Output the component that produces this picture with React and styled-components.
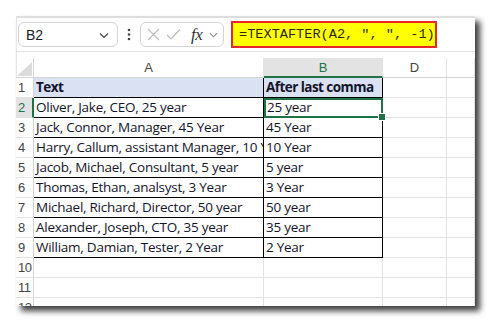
import React from "react";
import styled, { createGlobalStyle } from "styled-components";

const Global = createGlobalStyle`
  html, body { margin: 0; padding: 0; background: #ffffff; }
  body { width: 492px; height: 323px; overflow: hidden; }
`;

const Page = styled.div`
  padding: 16px 0 0 16px;
`;

const Window = styled.div`
  width: 459px;
  height: 290px;
  background: #ffffff;
  overflow: hidden;
  border-top: 2px solid #dedede;
  box-sizing: border-box;
  box-shadow: 1px 0 0 #e6e6e6 inset, 5px 5px 6px rgba(0, 0, 0, 0.75);
  font-family: "Open Sans", "Liberation Sans", sans-serif;
`;

const FormulaBar = styled.div`
  display: flex;
  align-items: center;
  height: 34px;
  padding-left: 2px;
  border-bottom: 1px solid #e3e3e3;
  box-sizing: border-box;
`;

const NameBox = styled.div`
  width: 100px;
  height: 25px;
  box-sizing: border-box;
  border: 1px solid #d4d4d4;
  border-radius: 6px;
  display: flex;
  align-items: center;
  justify-content: space-between;
  padding: 0 7px 0 7px;
  font-family: "Liberation Sans", Arial, sans-serif;
  font-size: 14px;
  color: #222;
`;

const Dots = styled.div`
  width: 22px;
  display: flex;
  justify-content: center;
`;

const FxBox = styled.div`
  width: 84px;
  height: 25px;
  box-sizing: border-box;
  border: 1px solid #d4d4d4;
  border-radius: 6px;
  display: flex;
  align-items: center;
  padding-left: 6px;
  gap: 6px;
`;

const Fx = styled.span`
  font-family: "Liberation Serif", "DejaVu Serif", serif;
  font-style: italic;
  font-size: 17px;
  color: #333;
  margin-left: 4px;
  letter-spacing: -0.5px;
`;

const FormulaBox = styled.div`
  margin-left: 7px;
  width: 206px;
  height: 27px;
  box-sizing: border-box;
  background: #ffff00;
  border: 2px solid #e8262c;
  display: flex;
  align-items: center;
  padding-left: 6px;
  font-family: "Liberation Mono", "DejaVu Sans Mono", monospace;
  font-size: 13.6px;
  color: #2b2b1a;
  white-space: pre;
  overflow: hidden;
`;

const Sheet = styled.div`
  display: grid;
  grid-template-columns: 18px 230px 119px 64px 28px;
  grid-auto-rows: 20px;
  margin-top: 6px;
`;

const Cell = styled.div`
  box-sizing: border-box;
  border-right: 1px solid ${(p) => p.$r || "#e1e1e1"};
  border-bottom: 1px solid ${(p) => p.$b || "#e1e1e1"};
  background: ${(p) => p.$bg || "#ffffff"};
  font-family: "Open Sans", "Liberation Sans", sans-serif;
  font-size: 13.5px;
  font-weight: ${(p) => (p.$bold ? 700 : 400)};
  color: #14142b;
  padding-left: 2px;
  line-height: 19px;
  white-space: nowrap;
  overflow: hidden;
  text-overflow: clip;
  letter-spacing: ${(p) => (p.$bold ? "-0.55px" : "-0.25px")};
`;

const ColHead = styled.div`
  box-sizing: border-box;
  border-right: 1px solid #e1e1e1;
  border-bottom: ${(p) => (p.$sel ? "2px solid #217346" : "1px solid #d4d4d4")};
  background: ${(p) => (p.$sel ? "#e3e3e3" : "#ffffff")};
  color: ${(p) => (p.$sel ? "#217346" : "#444")};
  font-family: "Liberation Sans", Arial, sans-serif;
  font-size: 13px;
  display: flex;
  align-items: center;
  justify-content: center;
`;

const Corner = styled.div`
  box-sizing: border-box;
  border-right: 1px solid #d4d4d4;
  border-bottom: 1px solid #d4d4d4;
  position: relative;
  overflow: hidden;
  &::after {
    content: "";
    position: absolute;
    right: 1px;
    bottom: 1px;
    width: 0;
    height: 0;
    border-left: 15px solid transparent;
    border-bottom: 14px solid #dcdcdc;
  }
`;

const RowHead = styled.div`
  box-sizing: border-box;
  border-right: ${(p) => (p.$sel ? "2px solid #217346" : "1px solid #d4d4d4")};
  border-bottom: 1px solid #e1e1e1;
  background: ${(p) => (p.$sel ? "#e3e3e3" : "#ffffff")};
  color: ${(p) => (p.$sel ? "#217346" : "#444")};
  font-family: "Liberation Sans", Arial, sans-serif;
  font-size: 13px;
  line-height: 19px;
  padding-left: 2px;
  letter-spacing: -0.5px;
`;

const Selected = styled(Cell)`
  position: relative;
  overflow: visible;
  outline: 2px solid #217346;
  outline-offset: -2px;
  padding-left: 3px;
  &::after {
    content: "";
    position: absolute;
    right: -4px;
    bottom: -4px;
    width: 6px;
    height: 6px;
    background: #217346;
    border: 1px solid #fff;
  }
`;

const data = [
  ["Oliver, Jake, CEO, 25 year", "25 year"],
  ["Jack, Connor, Manager, 45 Year", "45 Year"],
  ["Harry, Callum, assistant Manager, 10 Year", "10 Year"],
  ["Jacob, Michael, Consultant, 5 year", "5 year"],
  ["Thomas, Ethan, analsyst, 3 Year", "3 Year"],
  ["Michael, Richard, Director, 50 year", "50 year"],
  ["Alexander, Joseph, CTO, 35 year", "35 year"],
  ["William, Damian, Tester, 2 Year", "2 Year"],
];

const Chevron = ({ size = 12, color = "#444" }) => (
  <svg width={size} height={size} viewBox="0 0 12 12">
    <path d="M2 4.5 L6 8.5 L10 4.5" fill="none" stroke={color} strokeWidth="1.2" />
  </svg>
);

export default function App() {
  const blank = (key) => [
    <Cell key={key + "d"} />,
    <Cell key={key + "e"} />,
  ];
  return (
    <Page>
      <Global />
      <Window>
        <FormulaBar>
          <NameBox>
            <span>B2</span>
            <Chevron />
          </NameBox>
          <Dots>
            <svg width="4" height="13" viewBox="0 0 4 13">
              <circle cx="2" cy="2" r="1.3" fill="#444" />
              <circle cx="2" cy="6.5" r="1.3" fill="#444" />
              <circle cx="2" cy="11" r="1.3" fill="#444" />
            </svg>
          </Dots>
          <FxBox>
            <svg width="13" height="13" viewBox="0 0 13 13">
              <path d="M1 1 L12 12 M12 1 L1 12" stroke="#bdbdbd" strokeWidth="1.2" fill="none" />
            </svg>
            <svg width="15" height="13" viewBox="0 0 15 13">
              <path d="M1 7 L5 11 L14 1.5" stroke="#bdbdbd" strokeWidth="1.2" fill="none" />
            </svg>
            <Fx>fx</Fx>
            <Chevron size={11} color="#888" />
          </FxBox>
          <FormulaBox>{'=TEXTAFTER(A2, ", ", -1)'}</FormulaBox>
        </FormulaBar>
        <Sheet>
          <Corner />
          <ColHead>A</ColHead>
          <ColHead $sel>B</ColHead>
          <ColHead>D</ColHead>
          <ColHead />

          <RowHead>1</RowHead>
          <Cell $bg="#d9e1f2" $bold $b="#000" $r="#000">Text</Cell>
          <Cell $bg="#d9e1f2" $bold $b="#000" $r="#000">After last comma</Cell>
          {blank("h")}

          {data.map(([a, b], i) => (
            <React.Fragment key={i}>
              <RowHead $sel={i === 0}>{i + 2}</RowHead>
              <Cell $b="#000" $r="#000">{a}</Cell>
              {i === 0 ? (
                <Selected $b="#000" $r="#000">{b}</Selected>
              ) : (
                <Cell $b="#000" $r="#000">{b}</Cell>
              )}
              {blank("r" + i)}
            </React.Fragment>
          ))}

          {[10, 11, 12].map((n) => (
            <React.Fragment key={n}>
              <RowHead>{n}</RowHead>
              <Cell />
              <Cell />
              {blank("e" + n)}
            </React.Fragment>
          ))}
        </Sheet>
      </Window>
    </Page>
  );
}
